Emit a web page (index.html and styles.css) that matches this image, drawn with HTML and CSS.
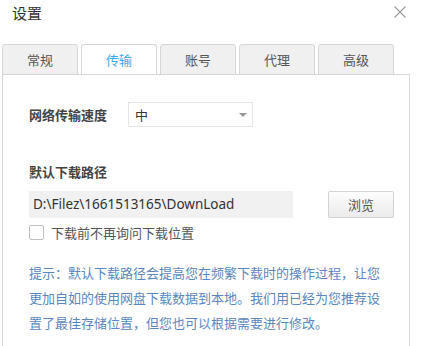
FILE: index.html
```html
<!DOCTYPE html>
<html lang="zh-CN">
<head>
    <meta charset="UTF-8">
    <meta name="viewport" content="width=device-width, initial-scale=1.0">
    <title>设置</title>
    <link rel="stylesheet" href="styles.css">
</head>
<body>
    <div class="dialog">
        <!-- Title bar -->
        <div class="header">
            <div class="title">设置</div>
            <svg class="close" width="14" height="12" viewBox="0 0 14 12">
                <path d="M1.5 0.5 L12.5 11.5 M12.5 0.5 L1.5 11.5" stroke="#9a9a9a" stroke-width="1.1" fill="none"/>
            </svg>
        </div>

        <!-- Tabs -->
        <div class="tabs">
            <div class="tab">常规</div>
            <div class="tab active">传输</div>
            <div class="tab">账号</div>
            <div class="tab">代理</div>
            <div class="tab">高级</div>
        </div>

        <!-- Transfer panel -->
        <div class="panel">
            <div class="row speed-row">
                <div class="label">网络传输速度</div>
                <div class="select">
                    <span>中</span>
                    <span class="arrow"></span>
                </div>
            </div>

            <div class="label section-label">默认下载路径</div>
            <div class="row path-row">
                <div class="path-input">D:\Filez\1661513165\DownLoad</div>
                <button class="browse-btn">浏览</button>
            </div>
            <label class="check-row">
                <span class="checkbox"></span>
                <span>下载前不再询问下载位置</span>
            </label>

            <p class="tip">提示：默认下载路径会提高您在频繁下载时的操作过程，让您更加自如的使用网盘下载数据到本地。我们用已经为您推荐设置了最佳存储位置，但您也可以根据需要进行修改。</p>
        </div>
    </div>
</body>
</html>
```

FILE: styles.css
```css
/* Global */
body {
    margin: 0;
    background: #fff;
    font-family: "Noto Sans CJK SC", sans-serif;
    font-size: 13px;
    color: #333;
}

.dialog {
    box-sizing: border-box;
    height: 100vh;
    display: flex;
    flex-direction: column;
    padding: 0 15px 0 2px;
    overflow: hidden;
}

/* Title bar */
.header {
    display: flex;
    justify-content: space-between;
    align-items: center;
    height: 24px;
    padding: 0 3px 0 10px;
}

.title {
    font-size: 15px;
    color: #333;
}

/* Tabs */
.tabs {
    display: flex;
    gap: 3px;
    margin-top: 20px;
    margin-bottom: -1px;
}

.tab {
    box-sizing: border-box;
    width: 76px;
    height: 31px;
    line-height: 29px;
    text-align: center;
    background: #f0f0f0;
    border: 1px solid #d6d6d6;
    border-radius: 3px 3px 0 0;
    color: #555;
}

.tab.active {
    background: #fff;
    border-bottom-color: #fff;
    color: #3ba9e8;
}

/* Panel */
.panel {
    flex: 1;
    border: 1px solid #d6d6d6;
    border-bottom: none;
    padding: 0 0 0 26px;
}

.row {
    display: flex;
    align-items: center;
}

.label {
    font-weight: bold;
    color: #444;
}

.speed-row {
    margin-top: 27px;
    gap: 20px;
}

.speed-row .label {
    width: 79px;
}

.select {
    box-sizing: border-box;
    width: 125px;
    height: 25px;
    border: 1px solid #e6e6e6;
    display: flex;
    justify-content: space-between;
    align-items: center;
    padding: 0 5px 0 6px;
    color: #333;
}

.arrow {
    width: 0;
    height: 0;
    border-left: 4px solid transparent;
    border-right: 4px solid transparent;
    border-top: 4px solid #999;
}

.section-label {
    margin-top: 36px;
    line-height: 18px;
}

.path-row {
    margin-top: 10px;
    gap: 35px;
}

.path-input {
    box-sizing: border-box;
    width: 264px;
    height: 27px;
    line-height: 27px;
    padding-left: 4px;
    background: #f1f1f1;
    font-family: "Noto Sans", "Noto Sans CJK SC", sans-serif;
    font-size: 13.5px;
    color: #333;
}

.browse-btn {
    width: 66px;
    height: 27px;
    background: linear-gradient(#fdfdfd, #ebebeb);
    border: 1px solid #d3d3d3;
    border-radius: 2px;
    font-family: "Noto Sans CJK SC", sans-serif;
    font-size: 13px;
    color: #555;
    padding: 0;
}

.check-row {
    display: flex;
    align-items: center;
    gap: 7px;
    margin-top: 6px;
    height: 16px;
    color: #555;
}

.checkbox {
    box-sizing: border-box;
    width: 15px;
    height: 15px;
    border: 1px solid #bdbdbd;
    border-radius: 2px;
    background: #fff;
}

.tip {
    width: 358px;
    margin: 20px 0 0;
    line-height: 25px;
    color: #5b87bd;
}
```
